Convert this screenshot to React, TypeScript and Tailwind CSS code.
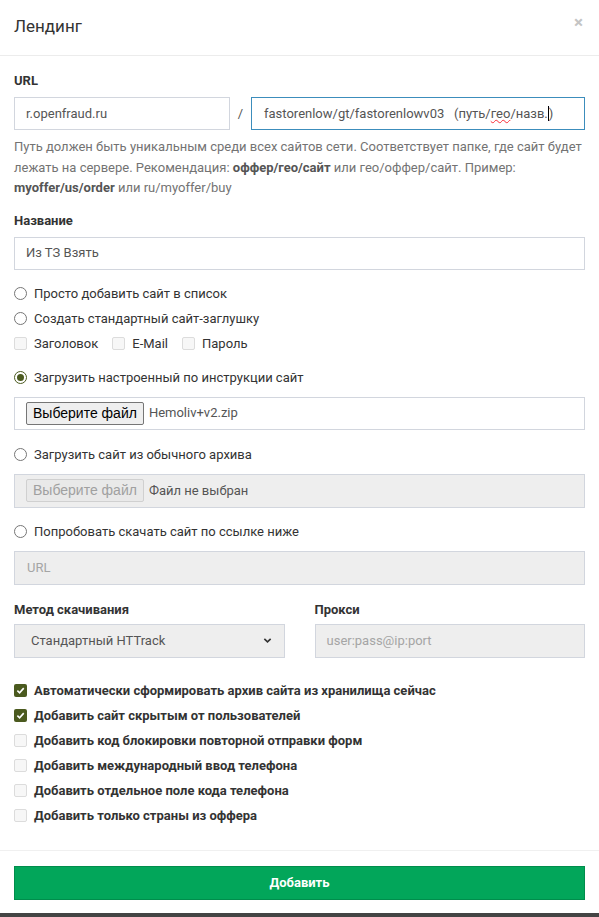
const font = { fontFamily: "Roboto, 'Noto Sans', sans-serif" };
const sysFont = { fontFamily: "'Liberation Sans', Arial, sans-serif" };

function Radio({ checked, label }: { checked?: boolean; label: string }) {
  return (
    <label className="flex items-center gap-[7px] text-[13px] text-[#333]">
      <span
        className={`w-[13px] h-[13px] rounded-full border bg-white flex items-center justify-center shrink-0 ${
          checked ? "border-[#4b5a1f]" : "border-[#767676]"
        }`}
      >
        {checked && <span className="w-[7px] h-[7px] rounded-full bg-[#4b5a1f]" />}
      </span>
      {label}
    </label>
  );
}

function Check({ checked, label, bold }: { checked?: boolean; label: string; bold?: boolean }) {
  return (
    <label className={`flex items-center gap-[7px] text-[13px] text-[#333] ${bold ? "font-bold" : ""}`}>
      {checked ? (
        <span className="w-[13px] h-[13px] rounded-[2px] bg-[#4b5a1f] flex items-center justify-center shrink-0">
          <svg width="9" height="9" viewBox="0 0 10 10">
            <path d="M1.5 5.2 L4 7.6 L8.6 2.4" fill="none" stroke="white" strokeWidth="1.8" />
          </svg>
        </span>
      ) : (
        <span className="w-[13px] h-[13px] rounded-[2px] border border-[#dcdcdc] bg-[#f7f7f7] shrink-0" />
      )}
      {label}
    </label>
  );
}

const options: [string, boolean][] = [
  ["Автоматически сформировать архив сайта из хранилища сейчас", true],
  ["Добавить сайт скрытым от пользователей", true],
  ["Добавить код блокировки повторной отправки форм", false],
  ["Добавить международный ввод телефона", false],
  ["Добавить отдельное поле кода телефона", false],
  ["Добавить только страны из оффера", false],
];

export default function App() {
  return (
    <div className="w-[599px] h-[917px] bg-white flex flex-col" style={font}>
      <div className="h-[56px] px-[14px] flex items-center justify-between border-b border-[#ececec]">
        <h4 className="text-[17px] text-[#333] pb-[1px]">Лендинг</h4>
        <span className="text-[#c4c4c4] text-[17px] font-bold mr-[2px] mb-[10px]">×</span>
      </div>

      <div className="px-[14px] pt-[16px] flex flex-col">
        <div className="text-[13px] font-bold text-[#333] h-[18px] leading-[18px]">URL</div>
        <div className="flex items-center mt-[7px]">
          <div className="w-[216px] h-[33px] border border-[#d2d6de] flex items-center pl-[11px] text-[13px] text-[#555]">
            r.openfraud.ru
          </div>
          <div className="w-[21px] text-center text-[13px] text-[#555]">/</div>
          <div className="flex-1 h-[33px] border border-[#3c8dbc] flex items-center pl-[12px] text-[13px] text-[#555] whitespace-pre">
            fastorenlow/gt/fastorenlowv03   (путь/<span className="underline decoration-wavy decoration-red-500 decoration-[1px]">гео</span>/назв.<span className="inline-block w-px h-[15px] bg-black align-middle" />)
          </div>
        </div>
        <p className="text-[13px] leading-[20.5px] text-[#737373] mt-[7px]">
          Путь должен быть уникальным среди всех сайтов сети. Соответствует папке, где сайт будет лежать на сервере. Рекомендация: <b className="text-[#555]">оффер/гео/сайт</b> или гео/оффер/сайт. Пример: <b className="text-[#555]">myoffer/us/order</b> или ru/myoffer/buy
        </p>

        <div className="text-[13px] font-bold text-[#333] h-[18px] leading-[18px] mt-[13px]">Название</div>
        <div className="h-[33px] border border-[#d2d6de] flex items-center pl-[11px] text-[13px] text-[#555] mt-[7px]">
          Из ТЗ Взять
        </div>

        <div className="flex flex-col gap-[9px] mt-[16px]">
          <div className="h-[16px] flex items-center"><Radio label="Просто добавить сайт в список" /></div>
          <div className="h-[16px] flex items-center"><Radio label="Создать стандартный сайт-заглушку" /></div>
          <div className="h-[16px] flex items-center gap-[14px]">
            <Check label="Заголовок" />
            <Check label="E-Mail" />
            <Check label="Пароль" />
          </div>
        </div>

        <div className="h-[16px] flex items-center mt-[18px]"><Radio checked label="Загрузить настроенный по инструкции сайт" /></div>
        <div className="h-[33px] border border-[#d2d6de] flex items-center pl-[11px] mt-[11px]">
          <span className="h-[23px] px-[6px] border border-[#767676] rounded-[2px] bg-[#efefef] text-[14px] text-black flex items-center" style={sysFont}>
            Выберите файл
          </span>
          <span className="text-[13px] text-[#555] ml-[5px]">Hemoliv+v2.zip</span>
        </div>

        <div className="h-[16px] flex items-center mt-[17px]"><Radio label="Загрузить сайт из обычного архива" /></div>
        <div className="h-[34px] border border-[#d2d6de] bg-[#eeeeee] flex items-center pl-[11px] mt-[11px]">
          <span className="h-[23px] px-[6px] border border-[#d0d0d0] rounded-[2px] bg-[#e9e9e9] text-[14px] text-[#a0a0a0] flex items-center" style={sysFont}>
            Выберите файл
          </span>
          <span className="text-[13px] text-[#555] ml-[5px]">Файл не выбран</span>
        </div>

        <div className="h-[16px] flex items-center mt-[16px]"><Radio label="Попробовать скачать сайт по ссылке ниже" /></div>
        <div className="h-[34px] border border-[#d2d6de] bg-[#eeeeee] flex items-center pl-[12px] mt-[11px] text-[13px] text-[#a5a5a5]">
          URL
        </div>

        <div className="grid grid-cols-2 gap-[30px] mt-[16px]">
          <div className="flex flex-col">
            <div className="text-[13px] font-bold text-[#333] h-[18px] leading-[18px]">Метод скачивания</div>
            <div className="h-[34px] border border-[#d2d6de] bg-[#eeeeee] flex items-center justify-between pl-[16px] pr-[12px] mt-[5px] text-[13px] text-[#555]">
              Стандартный HTTrack
              <svg width="9" height="9" viewBox="0 0 10 10">
                <path d="M1.5 3.2 L5 6.6 L8.5 3.2" fill="none" stroke="#333" strokeWidth="1.8" />
              </svg>
            </div>
          </div>
          <div className="flex flex-col">
            <div className="text-[13px] font-bold text-[#333] h-[18px] leading-[18px]">Прокси</div>
            <div className="h-[34px] border border-[#d2d6de] bg-[#eeeeee] flex items-center pl-[11px] mt-[5px] text-[13px] text-[#a5a5a5]">
              user:pass@ip:port
            </div>
          </div>
        </div>

        <div className="flex flex-col gap-[9px] mt-[25px]">
          {options.map(([label, checked]) => (
            <div key={label} className="h-[16px] flex items-center">
              <Check bold checked={checked} label={label} />
            </div>
          ))}
        </div>
      </div>

      <div className="mt-auto border-t border-[#f0f0f0] px-[14px] pt-[15px] pb-[13px]">
        <button className="w-full h-[34px] bg-[#02a65a] border border-[#008d4c] text-white text-[13px] font-bold">
          Добавить
        </button>
      </div>
      <div className="h-[4px] bg-[#444]" />
    </div>
  );
}
